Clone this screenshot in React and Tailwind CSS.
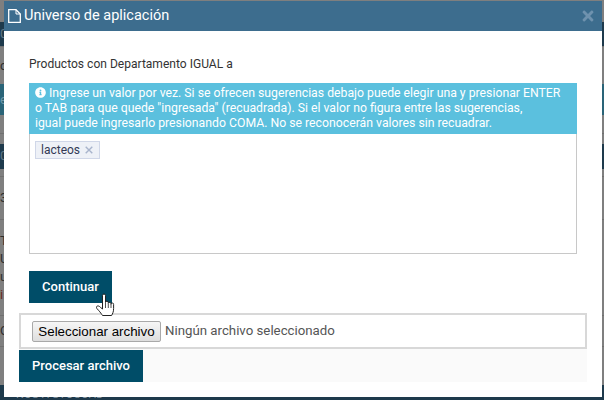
import { FaInfoCircle, FaTimes } from "react-icons/fa";

function Strip({ className, children }) {
  return <div className={`flex flex-col justify-center text-[13px] leading-[18px] whitespace-nowrap ${className}`}>{children}</div>;
}

function PageBehind() {
  return (
    <div className="absolute inset-0 flex flex-col bg-[#7f7f7f] text-[#2e2e2e] font-['Roboto',sans-serif]">
      <Strip className="h-[22px]" />
      <Strip className="h-[25px] bg-[#1e3a4c] text-[#5d7686]">0</Strip>
      <Strip className="h-[38px] border-t border-[#707070]">c</Strip>
      <Strip className="h-[32px] bg-[#2a6478] text-[#6f98a8]">e</Strip>
      <Strip className="h-[18px]" />
      <Strip className="h-[11px] border-t border-[#707070]" />
      <Strip className="h-[25px] bg-[#1e3a4c] text-[#5d7686]">0</Strip>
      <Strip className="h-[7px]" />
      <Strip className="h-[44px] border-t border-[#707070]">3</Strip>
      <Strip className="h-[97px] border-t border-[#707070] text-[#2e2e2e]">
        <span>T</span>
        <span>U</span>
        <span>u</span>
        <span className="text-[#6b2a1e]">i</span>
      </Strip>
      <Strip className="h-[32px] border-t border-[#707070]">O</Strip>
      <Strip className="h-[39px] border-t border-[#707070]" />
      <div className="flex-1 bg-[#1e3a4c] pl-[16px] pt-[5px] text-[11px] leading-[10px] tracking-wide text-[#8a9aa5] whitespace-nowrap">NOS A STOCOAD</div>
    </div>
  );
}

function FileIcon() {
  return (
    <svg width="13" height="14" viewBox="0 0 13 14" fill="none" stroke="#fff" strokeWidth="1.300">
      <path d="M.7.7h7.300l4.300 4.300v8.300H.7z" />
      <path d="M8 .7v4.300h4.300" strokeWidth="1" />
    </svg>
  );
}

function Tag() {
  return (
    <span className="flex items-center h-[18px] pl-[5px] pr-[6px] gap-[5px] bg-[#eef1f7] border border-[#d0d7e8] text-[12px] text-[#333a55]">
      lacteos
      <svg width="8" height="8" viewBox="0 0 8 8" stroke="#a8b4cc" strokeWidth="1.400">
        <path d="M.7.7l6.600 6.600M7.300.7L.7 7.300" />
      </svg>
    </span>
  );
}

function FileBar() {
  return (
    <div className="mt-[10px] mx-[15px] bg-[#fafafa] h-[69px]">
      <div className="h-[36px] bg-white border-2 border-[#d8d8d8] flex items-center pl-[11px] gap-[4px]">
        <button className="h-[21px] w-[129px] border border-[#a9a9a9] rounded-[2px] bg-gradient-to-b from-[#f6f6f6] to-[#dedede] text-[13.330px] text-black font-['Liberation_Sans',sans-serif] whitespace-nowrap">Seleccionar archivo</button>
        <span className="text-[13.250px] text-[#555555] whitespace-nowrap">Ningún archivo seleccionado</span>
      </div>
      <button className="mt-px h-[32px] w-[124px] bg-[#004d68] text-white text-[13px] font-medium">Procesar archivo</button>
    </div>
  );
}

function Cursor() {
  return (
    <svg className="absolute left-[96px] top-[293px]" width="19" height="25" viewBox="0 0 19 25">
      <path d="M6.500 2.500a1.500 1.500 0 0 1 3 0V9.500a1.400 1.400 0 0 1 2.800.2v.6a1.400 1.400 0 0 1 2.700.3v.6a1.300 1.300 0 0 1 2.600.3v4c0 3.500-1 5-2 7H6.500c-1-1.500-2-3-4-5.200L.9 15.500c-.8-1-.5-2.200.5-2.500 1-.3 2 .2 3 1.300L6.500 16z" fill="#fff" stroke="#222" strokeWidth="1" strokeLinejoin="round" />
      <path d="M9.500 10v5M12.300 10.500v4.500M15 11v4" stroke="#222" strokeWidth="0.8" fill="none" />
    </svg>
  );
}

export default function App() {
  return (
    <div className="relative w-[604px] h-[400px] overflow-hidden font-['Roboto',sans-serif]">
      <PageBehind />
      <div className="absolute left-[4px] top-px w-[598px] h-[396px] bg-white">
        <div className="h-[30px] bg-[#3d6d8e] flex items-center gap-[3px] pl-[4px] pr-[6px] text-white">
          <FileIcon />
          <span className="text-[14.500px]">Universo de aplicación</span>
          <FaTimes size={16} className="ml-auto text-[#6f92ae]" />
        </div>
        <div className="px-[25px]">
          <p className="mt-[23px] text-[12.050px] leading-[20px] text-[#333333]">Productos con Departamento IGUAL a</p>
          <div className="mt-[9px] h-[51px] bg-[#5bc0de] text-white text-[12.250px] leading-[15px] px-[6px] py-[3px] whitespace-nowrap">
            <FaInfoCircle size={11} className="inline mr-[3px] align-[-1px]" />
            Ingrese un valor por vez. Si se ofrecen sugerencias debajo puede elegir una y presionar ENTER<br />
            o TAB para que quede "ingresada" (recuadrada). Si el valor no figura entre las sugerencias,<br />
            igual puede ingresarlo presionando COMA. No se reconocerán valores sin recuadrar.
          </div>
          <div className="h-[120px] flex items-start border border-t-0 border-[#c8c8c8] pt-[7px] pl-[5px]">
            <Tag />
          </div>
          <button className="mt-[17px] h-[32px] w-[83px] bg-[#004d68] text-white text-[13px] font-medium">Continuar</button>
        </div>
        <FileBar />
      </div>
      <Cursor />
    </div>
  );
}
